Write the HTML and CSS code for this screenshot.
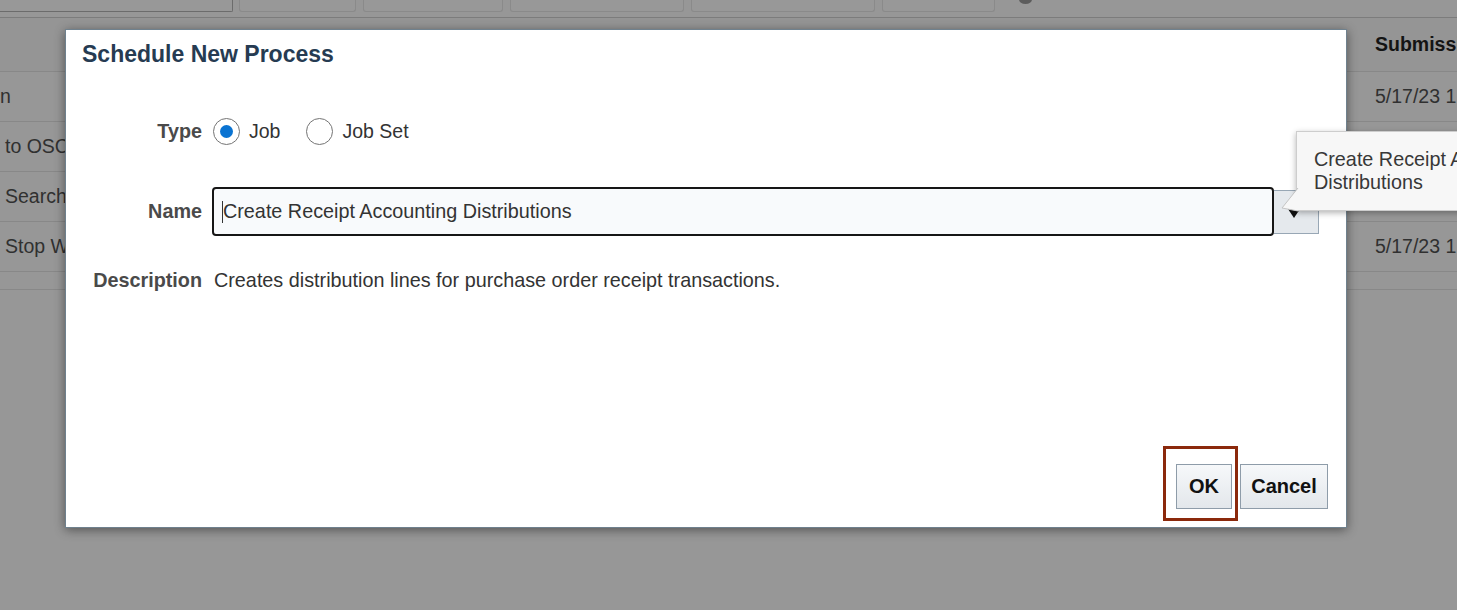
FILE: index.html
```html
<!DOCTYPE html>
<html lang="en">
<head>
    <meta charset="UTF-8">
    <title>Schedule New Process</title>
    <link rel="stylesheet" href="styles.css">
</head>
<body>
    <div class="toolbar">
        <span class="tb tb-main"></span>
        <span class="tb w1"></span>
        <span class="tb w2"></span>
        <span class="tb w3"></span>
        <span class="tb w4"></span>
        <span class="tb w5"></span>
        <span class="tb-icon"></span>
    </div>
    <div class="table">
        <div class="row head"><div class="cell"></div><div class="cell">Submission Time</div></div>
        <div class="row"><div class="cell"><span class="cut">n</span></div><div class="cell">5/17/23 1:12 PM</div></div>
        <div class="row"><div class="cell">to OSC Interface</div><div class="cell">5/17/23 1:10 PM</div></div>
        <div class="row"><div class="cell">Search Index</div><div class="cell">5/17/23 1:08 PM</div></div>
        <div class="row"><div class="cell">Stop Work Order</div><div class="cell">5/17/23 1:04 PM</div></div>
        <div class="row last"><div class="cell"></div><div class="cell"></div></div>
    </div>

    <div class="dialog">
        <h1>Schedule New Process</h1>
        <div class="form">
            <div class="field">
                <span class="label">Type</span>
                <div class="radios">
                    <span class="radio on"></span><span class="opt">Job</span>
                    <span class="radio"></span><span class="opt">Job Set</span>
                </div>
            </div>
            <div class="field field-name">
                <span class="label">Name</span>
                <div class="combo">
                    <div class="name-input"><span class="caret"></span>Create Receipt Accounting Distributions</div>
                    <div class="drop"><span class="arrow"></span></div>
                </div>
            </div>
            <div class="field field-desc">
                <span class="label">Description</span>
                <span class="desc">Creates distribution lines for purchase order receipt transactions.</span>
            </div>
        </div>
        <div class="footer">
            <div class="ok-wrap">
                <button class="btn btn-ok">OK</button>
                <span class="hl"></span>
            </div>
            <button class="btn btn-cancel">Cancel</button>
        </div>
    </div>

    <svg class="tip-pointer" width="18" height="28" viewBox="0 0 18 28">
        <polygon points="17,2 1,22 17,25" fill="#f7f7f7"/>
        <polyline points="17,2 1,22 17,25" fill="none" stroke="#c4c4c4" stroke-width="1"/>
    </svg>
    <div class="tooltip">Create Receipt Accounting<br>Distributions</div>
</body>
</html>
```

FILE: styles.css
```css
body { margin: 0; width: 1457px; height: 610px; overflow: hidden; position: relative; background: #979797; font-family: "Liberation Sans", Arial, sans-serif; }

.toolbar { display: flex; gap: 7px; height: 17px; border-bottom: 1px solid #7c7c7c; position: relative; }
.tb { height: 12px; box-sizing: border-box; border: 1px solid #8a8a8a; border-top: none; border-radius: 0 0 3px 3px; background: #989898; }
.tb-main { width: 233px; margin-right: -1px; border-color: #6c6c6c; border-left: none; border-radius: 0 0 2px 0; }
.w1 { width: 117px; }
.w2 { width: 140px; }
.w3 { width: 174px; }
.w4 { width: 184px; }
.w5 { width: 113px; }
.tb-icon { position: absolute; left: 1019px; top: -5px; width: 13px; height: 9px; border-radius: 50%; background: #5c5c5c; }

.table { font-size: 19.5px; color: #303030; white-space: nowrap; }
.row { display: grid; grid-template-columns: 1370px 1fr; height: 49px; align-items: center; border-bottom: 1px solid #888; }
.row.head { height: 53px; font-weight: bold; color: #141414; background: #959595; }
.row.last { height: 17px; }
.cell { padding-left: 5px; overflow: hidden; }
.cut { margin-left: -5px; }

.dialog { position: absolute; left: 65px; top: 29px; width: 1282px; height: 499px; box-sizing: border-box; background: #fff; border: 1px solid #6f818e; box-shadow: 0 2px 10px rgba(0, 0, 0, 0.45); display: flex; flex-direction: column; padding: 10px 18px 18px 16px; }
.dialog h1 { margin: 0; font-size: 23px; line-height: 28px; color: #263b52; }

.form { margin-top: 50px; }
.field { display: grid; grid-template-columns: 120px 1fr; column-gap: 10px; align-items: center; }
.field-name { margin-top: 42px; }
.field-desc { margin-top: 33px; line-height: 22px; }
.label { text-align: right; font-weight: bold; font-size: 19.8px; color: #4a4a4a; }

.radios { display: flex; align-items: center; font-size: 19.5px; color: #333; }
.radio { width: 27px; height: 27px; box-sizing: border-box; border: 1px solid #747474; border-radius: 50%; display: flex; align-items: center; justify-content: center; margin-left: 1px; margin-right: 9px; background: #fff; }
.radio.on::after { content: ""; width: 13px; height: 13px; border-radius: 50%; background: #0a73d2; }
.opt { margin-right: 25px; }

.combo { display: flex; align-items: center; }
.name-input { width: 1062px; height: 49px; box-sizing: border-box; border: 2px solid #161616; border-radius: 4px; background: #f8fafc; padding-left: 8px; display: flex; align-items: center; font-size: 19.8px; color: #333; }
.caret { width: 1px; height: 22px; background: #333; }
.drop { width: 45px; height: 44px; box-sizing: border-box; border: 1px solid #98a7b5; border-left: none; background: #e5e9ed; display: flex; align-items: center; justify-content: center; }
.arrow { width: 0; height: 0; border-left: 6px solid transparent; border-right: 6px solid transparent; border-top: 9px solid #111; margin-top: 4px; margin-left: -4px; }

.desc { font-size: 19.8px; color: #333; margin-left: 2px; }

.footer { margin-top: auto; display: flex; justify-content: flex-end; gap: 8px; }
.ok-wrap { position: relative; }
.btn { height: 45px; box-sizing: border-box; border: 1px solid #8e9ca9; background: linear-gradient(#f6f8fa, #e3e7eb); font-family: "Liberation Sans", Arial, sans-serif; font-weight: bold; font-size: 20px; color: #111; padding: 0; }
.btn-ok { width: 56px; }
.btn-cancel { width: 88px; }
.hl { position: absolute; left: -13px; top: -18px; width: 75px; height: 75px; box-sizing: border-box; border: 3px solid #8b290c; }

.tooltip { position: absolute; left: 1296px; top: 131px; height: 80px; box-sizing: border-box; padding: 16px 17px; background: #f7f7f7; border: 1px solid #cdcdcd; box-shadow: 0 2px 6px rgba(0, 0, 0, 0.3); font-size: 19.8px; line-height: 23px; color: #383838; white-space: nowrap; }
.tip-pointer { position: absolute; left: 1281px; top: 186px; z-index: 2; }
```
